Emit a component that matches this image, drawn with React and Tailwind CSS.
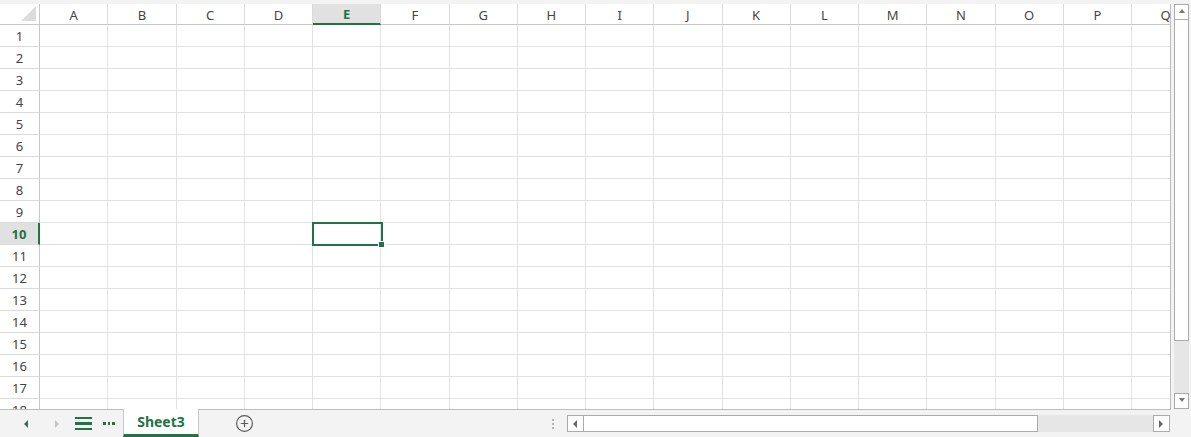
import { CirclePlus } from "lucide-react";

const COLS = ["A", "B", "C", "D", "E", "F", "G", "H", "I", "J", "K", "L", "M", "N", "O", "P", "Q"];
const ROWS = Array.from({ length: 18 }, (_, i) => i + 1);

function Tri({ dir, className }) {
    const d = {
        up: "M1 5 L4 1 L7 5 Z",
        down: "M1 1 L7 1 L4 5 Z",
        left: "M5 0 L5 8 L1 4 Z",
        right: "M1 0 L1 8 L5 4 Z",
    }[dir];
    return (
        <svg width="8" height="8" viewBox="0 0 8 8" className={className}>
            <path d={d} fill="currentColor" />
        </svg>
    );
}

function HeaderRow() {
    return (
        <div className="flex h-[21px] shrink-0">
            <div className="w-[40px] shrink-0 border-r border-b border-[#c8c8c8] bg-white relative">
                <div className="absolute right-[3px] bottom-[3px] w-[15px] h-[15px] bg-[#dcdcdc] [clip-path:polygon(100%_0,100%_100%,0_100%)]" />
            </div>
            {COLS.map((c) => (
                <div
                    key={c}
                    className={`w-[68.25px] shrink-0 flex items-center justify-center pt-[3px] border-r border-[#dadada] text-[13px] ${
                        c === "E"
                            ? "bg-[#e1e1e1] text-[#217346] font-bold border-b-2 border-b-[#217346]"
                            : "bg-white text-[#444] border-b border-b-[#c8c8c8]"
                    }`}
                >
                    {c}
                </div>
            ))}
        </div>
    );
}

function Row({ n }) {
    const active = n === 10;
    return (
        <div className="flex h-[22px] shrink-0">
            <div
                className={`w-[40px] shrink-0 flex items-center justify-center pt-[3px] border-b border-[#dadada] text-[13px] ${
                    active
                        ? "bg-[#e1e1e1] text-[#217346] font-bold border-r-2 border-r-[#217346]"
                        : "bg-white text-[#444] border-r border-r-[#c8c8c8]"
                }`}
            >
                {n}
            </div>
            {COLS.map((c) => (
                <div key={c} className="w-[68.25px] shrink-0 border-r border-b border-[#e1e1e1] relative">
                    {active && c === "E" && (
                        <div className="absolute -left-[1px] -top-[1px] w-[71px] h-[24px] border-2 border-[#217346] z-10">
                            <div className="absolute -right-[4px] -bottom-[4px] w-[7px] h-[7px] bg-[#217346] border border-white" />
                        </div>
                    )}
                </div>
            ))}
        </div>
    );
}

export default function App() {
    return (
        <div className="w-[1191px] h-[437px] bg-[#f3f3f3] flex flex-col overflow-hidden font-['Noto_Sans',sans-serif]">
            <div className="h-[4px] shrink-0" />
            <div className="flex h-[406px] shrink-0">
                <div className="w-[1171px] shrink-0 bg-white overflow-hidden border-r border-b border-[#bdbdbd] flex flex-col">
                    <HeaderRow />
                    {ROWS.map((n) => (
                        <Row key={n} n={n} />
                    ))}
                </div>
                <div className="w-[20px] shrink-0 flex flex-col pl-[3px] pr-[2px]">
                    <div className="h-[16px] border border-[#ababab] bg-white flex items-center justify-center text-[#777]">
                        <Tri dir="up" />
                    </div>
                    <div className="h-[321px] border-x border-b border-[#ababab] bg-white" />
                    <div className="flex-1 bg-[#e6e6e6]" />
                    <div className="h-[16px] mb-[1px] border border-[#ababab] bg-white flex items-center justify-center text-[#777]">
                        <Tri dir="down" />
                    </div>
                </div>
            </div>
            <div className="flex-1 flex items-stretch">
                <div className="w-[123px] shrink-0 flex items-center">
                    <div className="w-[54px] shrink-0 flex justify-center text-[#3f6a57]">
                        <Tri dir="left" />
                    </div>
                    <div className="w-[8px] shrink-0 flex justify-center text-[#c4c4c4]">
                        <Tri dir="right" />
                    </div>
                    <div className="ml-[13px] flex flex-col gap-[3px]">
                        <div className="w-[17px] h-[2.5px] bg-[#217346]" />
                        <div className="w-[17px] h-[2.5px] bg-[#217346]" />
                        <div className="w-[17px] h-[2.5px] bg-[#217346]" />
                    </div>
                    <div className="ml-[11px] flex gap-[2px]">
                        <div className="w-[2.5px] h-[2.5px] bg-[#217346]" />
                        <div className="w-[2.5px] h-[2.5px] bg-[#217346]" />
                        <div className="w-[2.5px] h-[2.5px] bg-[#217346]" />
                    </div>
                </div>
                <div className="w-[76px] shrink-0 bg-white border-x border-[#c8c8c8] border-b-[3px] border-b-[#217346] -mt-[1px] flex items-center justify-center text-[14px] font-bold text-[#217346]">
                    Sheet3
                </div>
                <div className="w-[90px] shrink-0 flex items-center justify-center">
                    <CirclePlus size={19} strokeWidth={1.5} className="text-[#5a5a5a]" />
                </div>
                <div className="flex-1 flex items-center justify-end pr-[21px]">
                    <div className="flex flex-col gap-[2px] mr-[13px]">
                        <div className="w-[2px] h-[2px] bg-[#b5b5b5]" />
                        <div className="w-[2px] h-[2px] bg-[#b5b5b5]" />
                        <div className="w-[2px] h-[2px] bg-[#b5b5b5]" />
                    </div>
                    <div className="flex h-[17px] w-[603px]">
                        <div className="w-[17px] border border-[#ababab] bg-white flex items-center justify-center text-[#666]">
                            <Tri dir="left" />
                        </div>
                        <div className="w-[454px] border-y border-r border-[#ababab] bg-white" />
                        <div className="flex-1 bg-[#e6e6e6]" />
                        <div className="w-[17px] border border-[#ababab] bg-white flex items-center justify-center text-[#666]">
                            <Tri dir="right" />
                        </div>
                    </div>
                </div>
            </div>
        </div>
    );
}
